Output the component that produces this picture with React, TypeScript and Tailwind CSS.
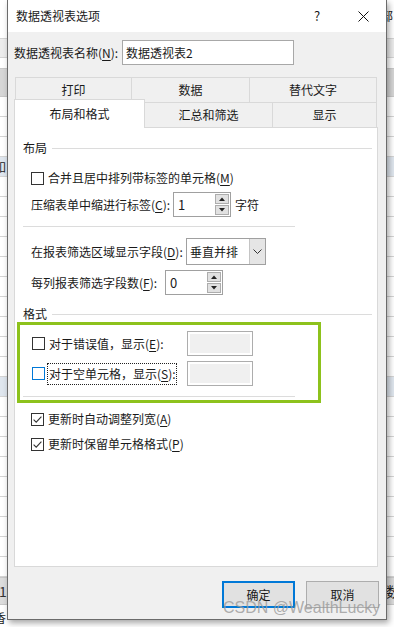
import React from 'react';

const FONT = "font-['Noto_Sans_CJK_SC','Noto_Sans',sans-serif]";

function Check({ checked = false, focus = false }: { checked?: boolean; focus?: boolean }) {
  return (
    <span
      className={`flex h-[13px] w-[13px] shrink-0 items-center justify-center border bg-white ${
        focus ? 'border-[#0078d7]' : 'border-[#333333]'
      }`}
    >
      {checked && (
        <svg width="11" height="11" viewBox="0 0 11 11">
          <path d="M1.6 5.6 L4.2 8.2 L9.4 2.6" fill="none" stroke="#333333" strokeWidth="1.1" />
        </svg>
      )}
    </span>
  );
}

function Key({ k }: { k: string }) {
  return <span className="underline underline-offset-2">{k}</span>;
}

function Spin({ value }: { value: string }) {
  return (
    <div className="flex h-[25px] w-[58px] items-center border border-[#a0a0a0] bg-white pl-[4px] pr-[1px]">
      <span className="flex-1 text-[13px]">{value}</span>
      <div className="flex flex-col gap-px">
        <span className="flex h-[10px] w-[14px] items-center justify-center border border-[#adadad] bg-[#e1e1e1]">
          <svg width="6" height="4" viewBox="0 0 6 4">
            <path d="M0 4 L3 0.5 L6 4 Z" fill="#222" />
          </svg>
        </span>
        <span className="flex h-[10px] w-[14px] items-center justify-center border border-[#adadad] bg-[#e1e1e1]">
          <svg width="6" height="4" viewBox="0 0 6 4">
            <path d="M0 0 L3 3.5 L6 0 Z" fill="#222" />
          </svg>
        </span>
      </div>
    </div>
  );
}

function ValueBox() {
  return (
    <div className="h-[25px] w-[66px] border border-[#adadad] bg-white p-[2px]">
      <div className="h-full w-full bg-[#f0f0f0]" />
    </div>
  );
}

function Heading({ text }: { text: string }) {
  return (
    <div className="flex h-[16px] items-center pl-[8px] pr-[5px]">
      <span>{text}</span>
      <span className="ml-[5px] h-px flex-1 bg-[#dcdcdc]" />
    </div>
  );
}

function Background() {
  const rows = Array.from({ length: 24 });
  return (
    <div className="flex h-full w-full flex-col bg-white text-[12px] text-[#222]">
      <div className="flex h-[38px] justify-end pr-[1px] pt-[8px]">
        <span>部</span>
      </div>
      <div className="h-[20px] border-y border-[#d4d4d4] bg-[#ececec]" />
      <div className="h-[10px]" />
      <div className="h-[29px] border-y border-[#c8c8c8] bg-[#d6d6d6]" />
      {rows.map((_, i) => (
        <div
          key={i}
          className={`flex h-[20px] items-center border-b border-[#d4d4d4] ${
            i === 3 || i === 14 ? 'bg-[#dfe6ee]' : ''
          }`}
        >
          {i === 3 && <span className="-ml-[6px]">吅</span>}
        </div>
      ))}
      <div className="flex h-[28px] items-center justify-between border-y border-[#c8c8c8] bg-[#dcdcdc] text-[14px]">
        <span className="-ml-[1px] text-[#333]">1</span>
        <span className="mr-[-6px]">数</span>
      </div>
      <div className="flex flex-1 items-end pb-[1px]">
        <span className="-ml-[6px]">香</span>
      </div>
    </div>
  );
}

export default function App() {
  return (
    <div className={`relative h-[627px] w-[394px] overflow-hidden ${FONT} text-[12px] leading-[16px] text-[#1a1a1a]`}>
      <Background />

      {/* dialog window */}
      <div className="absolute left-[7px] top-0 flex h-[620px] w-[380px] flex-col border-x border-b border-[#6b6b6b] bg-[#f0f0f0] shadow-[2px_3px_6px_rgba(0,0,0,0.35)]">
        {/* title bar */}
        <div className="flex h-[32px] items-center bg-white">
          <span className="flex-1 pl-[8px]">数据透视表选项</span>
          <span className="flex h-full w-[46px] items-center justify-center text-[13px]">?</span>
          <span className="flex h-full w-[46px] items-center justify-center">
            <svg width="11" height="11" viewBox="0 0 11 11">
              <path d="M0.5 0.5 L10.5 10.5 M10.5 0.5 L0.5 10.5" stroke="#111" strokeWidth="1" />
            </svg>
          </span>
        </div>

        {/* name row */}
        <div className="mt-[8px] flex items-center pl-[6px]">
          <span className="w-[108px]">
            数据透视表名称(<Key k="N" />):
          </span>
          <div className="flex h-[25px] w-[172px] items-center border border-[#a8a8a8] bg-white pl-[3px] text-[12px]">
            数据透视表2
          </div>
        </div>

        {/* tabs back row */}
        <div className="ml-[7px] mt-[12px] flex h-[25px]">
          <div className="flex w-[116px] items-center justify-center border-l border-t border-[#d9d9d9]">打印</div>
          <div className="flex w-[118px] items-center justify-center border-l border-t border-[#d9d9d9]">数据</div>
          <div className="flex w-[128px] items-center justify-center border-x border-t border-[#d9d9d9]">替代文字</div>
        </div>

        {/* tabs front row */}
        <div className="relative z-10 -mb-px ml-[6px] flex h-[26px] items-end">
          <div className="-mt-[3px] flex h-[29px] w-[131px] items-center justify-center border-x border-t border-[#d9d9d9] bg-white">
            布局和格式
          </div>
          <div className="flex h-[26px] w-[128px] items-center justify-center border-y border-r border-[#d9d9d9]">
            汇总和筛选
          </div>
          <div className="flex h-[26px] w-[104px] items-center justify-center border-y border-r border-[#d9d9d9]">
            显示
          </div>
        </div>

        {/* panel */}
        <div className="ml-[6px] flex h-[440px] w-[364px] flex-col border border-[#d9d9d9] bg-white">
          <div className="mt-[12px]">
            <Heading text="布局" />
          </div>

          <div className="mt-[14px] flex h-[16px] items-center gap-[4px] pl-[16px]">
            <Check />
            <span>
              合并且居中排列带标签的单元格(<Key k="M" />)
            </span>
          </div>

          <div className="mt-[6px] flex items-center pl-[16px]">
            <span className="w-[142px]">
              压缩表单中缩进行标签(<Key k="C" />):
            </span>
            <Spin value="1" />
            <span className="ml-[4px]">字符</span>
          </div>

          <div className="ml-[8px] mt-[9px] h-px w-[272px] bg-[#dcdcdc]" />

          <div className="mt-[11px] flex items-center pl-[16px]">
            <span className="w-[155px]">
              在报表筛选区域显示字段(<Key k="D" />):
            </span>
            <div className="flex h-[27px] w-[80px] items-center border border-[#a0a0a0] bg-white">
              <span className="flex-1 pl-[3px]">垂直并排</span>
              <span className="flex h-full w-[16px] items-center justify-center border-l border-[#c4c4c4] bg-[#e5e5e5]">
                <svg width="9" height="5" viewBox="0 0 9 5">
                  <path d="M0.5 0.5 L4.5 4.5 L8.5 0.5" fill="none" stroke="#333" strokeWidth="1" />
                </svg>
              </span>
            </div>
          </div>

          <div className="mt-[5px] flex items-center pl-[16px]">
            <span className="w-[134px]">
              每列报表筛选字段数(<Key k="F" />):
            </span>
            <Spin value="0" />
          </div>

          <div className="mt-[11px]">
            <Heading text="格式" />
          </div>

          {/* highlighted format block */}
          <div className="ml-[2px] h-[81px] w-[304px] border-[3px] border-[#8dc21c]">
            <div className="mt-[6px] flex items-center pl-[12px]">
              <Check />
              <span className="ml-[4px] w-[138px]">
                对于错误值，显示(<Key k="E" />):
              </span>
              <ValueBox />
            </div>
            <div className="mt-[5px] flex items-center pl-[12px]">
              <Check focus />
              <span className="ml-[2px] flex h-[22px] w-[130px] items-center border border-dotted border-[#222] pl-[1px]">
                对于空单元格，显示(<Key k="S" />):
              </span>
              <span className="ml-[10px]">
                <ValueBox />
              </span>
            </div>
            <div className="ml-[3px] mt-[10px] h-px w-[272px] bg-[#dcdcdc]" />
          </div>

          <div className="mt-[8px] flex h-[16px] items-center gap-[4px] pl-[16px]">
            <Check checked />
            <span>
              更新时自动调整列宽(<Key k="A" />)
            </span>
          </div>
          <div className="mt-[9px] flex h-[16px] items-center gap-[4px] pl-[16px]">
            <Check checked />
            <span>
              更新时保留单元格格式(<Key k="P" />)
            </span>
          </div>
        </div>

        {/* buttons */}
        <div className="mt-[14px] flex justify-end gap-[11px] pr-[7px]">
          <button className="flex h-[27px] w-[73px] items-center justify-center border-2 border-[#0078d7] bg-[#e1e1e1]">
            确定
          </button>
          <button className="flex h-[27px] w-[73px] items-center justify-center border border-[#adadad] bg-[#e1e1e1]">
            取消
          </button>
        </div>
      </div>

      {/* watermark */}
      <span className="absolute left-[223px] top-[598px] font-['Liberation_Sans',sans-serif] text-[16px] leading-[20px] text-[#9a9a9a]/80">
        CSDN @WealthLucky
      </span>
    </div>
  );
}
